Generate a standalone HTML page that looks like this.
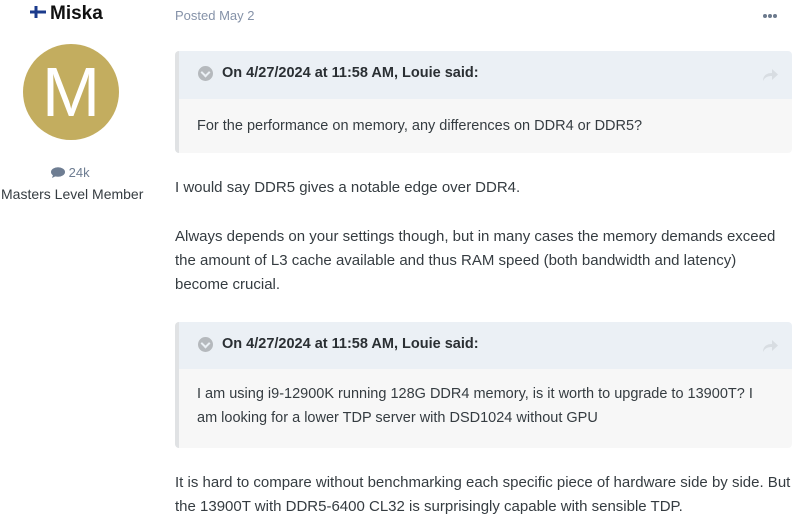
<!DOCTYPE html>
<html><head><meta charset="utf-8"><style>
*{margin:0;padding:0;box-sizing:border-box}
body{width:800px;height:521px;background:#fff;font-family:"Liberation Sans",sans-serif;color:#353c41;overflow:hidden;position:relative;font-size:15px}
.abs{position:absolute;white-space:nowrap}
.q{position:absolute;left:175px;width:617px;border-left:4px solid #e0e2e4;border-radius:4px;overflow:hidden}
.qh{background:#ebf0f5;position:relative}
.qb{background:#f7f7f7;padding:0 0 0 18px;line-height:24px;font-size:14.5px}
.qh b{position:absolute;left:43px;font-size:14.5px;color:#2a2f33}
.chev{position:absolute;left:19px;width:15px;height:15px;border-radius:50%;background:#b5b9bd}
.chev:after{content:"";position:absolute;left:4px;top:3px;width:5px;height:5px;border-right:2px solid #ebf0f5;border-bottom:2px solid #ebf0f5;transform:rotate(45deg)}
p{position:absolute;left:175px;line-height:24px;white-space:nowrap}
.dot{width:4px;height:4px;border-radius:50%;background:#6c7a8d}
</style></head><body>
<div class="abs" style="left:30px;top:3px;font-size:19px;font-weight:bold;color:#111">
<svg width="16" height="12" viewBox="0 0 16 12" style="vertical-align:1px;margin-right:4px"><rect width="16" height="12" fill="#fff"/><rect x="0" y="4.5" width="16" height="3" fill="#1b3b8c"/><rect x="4.5" y="0" width="3" height="12" fill="#1b3b8c"/></svg>Miska</div>
<div class="abs" style="left:175px;top:8px;font-size:13px;color:#8592a8">Posted May 2</div>
<div class="abs" style="left:763px;top:14px;display:flex;gap:1px"><div class="dot"></div><div class="dot"></div><div class="dot"></div></div>
<div class="abs" style="left:23px;top:44px;width:96px;height:96px;border-radius:50%;background:#c3ad5f;color:#fff;font-size:70px;text-align:center;line-height:96px">M</div>
<div class="abs" style="left:51px;top:165px;font-size:13px;color:#6e7d92"><svg width="14" height="11" viewBox="0 0 14 11" style="vertical-align:-1px"><ellipse cx="7" cy="5" rx="7" ry="4.8" fill="#6e7d92"/><path d="M2 8 L1 11 L5 9 Z" fill="#6e7d92"/></svg> 24k</div>
<div class="abs" style="left:1px;top:186px;font-size:14px;color:#353c41">Masters Level Member</div>

<div class="q" style="top:51px;height:102px">
<div class="qh" style="height:48px"><span class="chev" style="top:15px"></span><b style="top:14px">On 4/27/2024 at 11:58 AM, Louie said:</b>
<svg style="position:absolute;right:14px;top:17px" width="16" height="13" viewBox="0 0 16 13"><path d="M1 13 C1 7 5 5 10 5 V1 L16 6.5 L10 12 V8 C6 8 3 9 1 13Z" fill="#d8dde2"/></svg></div>
<div class="qb" style="height:54px;padding-top:15px">For the performance on memory, any differences on DDR4 or DDR5?</div>
</div>
<p style="top:176px">I would say DDR5 gives a notable edge over DDR4.</p>
<p style="top:225px">Always depends on your settings though, but in many cases the memory demands exceed<br>the amount of L3 cache available and thus RAM speed (both bandwidth and latency)<br>become crucial.</p>

<div class="q" style="top:322px;height:126px">
<div class="qh" style="height:47px"><span class="chev" style="top:15px"></span><b style="top:14px">On 4/27/2024 at 11:58 AM, Louie said:</b>
<svg style="position:absolute;right:14px;top:17px" width="16" height="13" viewBox="0 0 16 13"><path d="M1 13 C1 7 5 5 10 5 V1 L16 6.5 L10 12 V8 C6 8 3 9 1 13Z" fill="#d8dde2"/></svg></div>
<div class="qb" style="height:79px;padding-top:13px">I am using i9-12900K running 128G DDR4 memory, is it worth to upgrade to 13900T? I<br>am looking for a lower TDP server with DSD1024 without GPU</div>
</div>
<p style="top:471px">It is hard to compare without benchmarking each specific piece of hardware side by side. But<br>the 13900T with DDR5-6400 CL32 is surprisingly capable with sensible TDP.</p>
</body></html>
